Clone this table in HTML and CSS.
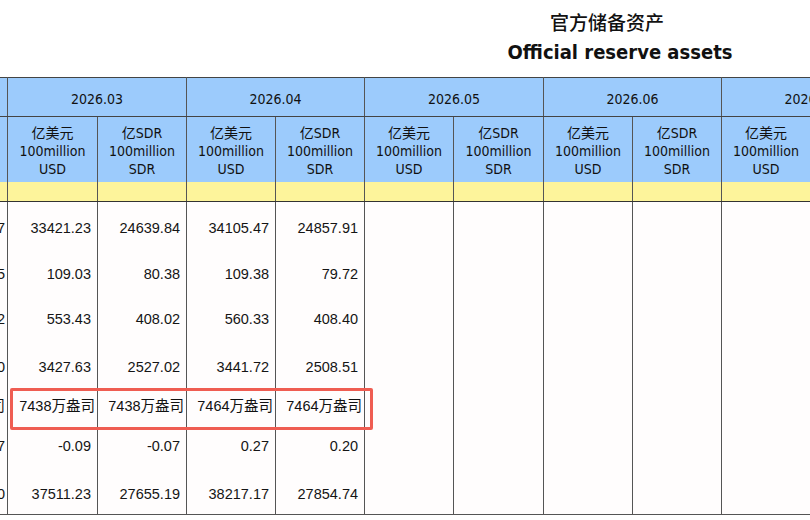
FILE: index.html
```html
<!DOCTYPE html>
<html lang="zh">
<head>
<meta charset="utf-8">
<title>官方储备资产 Official reserve assets</title>
<link rel="stylesheet" href="styles.css">
</head>
<body>
<div class="title">
  <div class="title-cn">官方储备资产</div>
  <div class="title-en">Official reserve assets</div>
</div>
<div class="sheet">
  <table class="grid">
    <colgroup>
      <col class="c-prev">
      <col class="c90"><col class="c89">
      <col class="c89"><col class="c89">
      <col class="c89"><col class="c90">
      <col class="c89"><col class="c89">
      <col class="c89"><col class="c89">
    </colgroup>
    <thead>
      <tr class="h-month">
        <th></th>
        <th colspan="2">2026.03</th>
        <th colspan="2">2026.04</th>
        <th colspan="2">2026.05</th>
        <th colspan="2">2026.06</th>
        <th colspan="2">2026.07</th>
      </tr>
      <tr class="h-unit">
        <th></th>
        <th>亿美元<br>100million<br>USD</th>
        <th>亿SDR<br>100million<br>SDR</th>
        <th>亿美元<br>100million<br>USD</th>
        <th>亿SDR<br>100million<br>SDR</th>
        <th>亿美元<br>100million<br>USD</th>
        <th>亿SDR<br>100million<br>SDR</th>
        <th>亿美元<br>100million<br>USD</th>
        <th>亿SDR<br>100million<br>SDR</th>
        <th>亿美元<br>100million<br>USD</th>
        <th>亿SDR<br>100million<br>SDR</th>
      </tr>
      <tr class="h-band">
        <th></th><th></th><th></th><th></th><th></th><th></th><th></th><th></th><th></th><th></th><th></th>
      </tr>
    </thead>
    <tbody>
      <tr class="r1">
        <td class="prev">24518.57</td><td>33421.23</td><td>24639.84</td><td>34105.47</td><td>24857.91</td><td></td><td></td><td></td><td></td><td></td><td></td>
      </tr>
      <tr class="r2">
        <td class="prev">79.85</td><td>109.03</td><td>80.38</td><td>109.38</td><td>79.72</td><td></td><td></td><td></td><td></td><td></td><td></td>
      </tr>
      <tr class="r3">
        <td class="prev">407.92</td><td>553.43</td><td>408.02</td><td>560.33</td><td>408.40</td><td></td><td></td><td></td><td></td><td></td><td></td>
      </tr>
      <tr class="r4">
        <td class="prev">2516.60</td><td>3427.63</td><td>2527.02</td><td>3441.72</td><td>2508.51</td><td></td><td></td><td></td><td></td><td></td><td></td>
      </tr>
      <tr class="r5 gold">
        <td class="prev">7421万盎司</td><td>7438万盎司</td><td>7438万盎司</td><td>7464万盎司</td><td>7464万盎司</td><td></td><td></td><td></td><td></td><td></td><td></td>
      </tr>
      <tr class="r6">
        <td class="prev">-0.07</td><td>-0.09</td><td>-0.07</td><td>0.27</td><td>0.20</td><td></td><td></td><td></td><td></td><td></td><td></td>
      </tr>
      <tr class="r7">
        <td class="prev">27527.30</td><td>37511.23</td><td>27655.19</td><td>38217.17</td><td>27854.74</td><td></td><td></td><td></td><td></td><td></td><td></td>
      </tr>
    </tbody>
  </table>
  <div class="highlight"></div>
</div>
</body>
</html>
```
FILE: styles.css
```css
html, body {
  margin: 0;
  padding: 0;
  background: #ffffff;
  overflow: hidden;
}

body {
  width: 810px;
  height: 520px;
  font-family: "Liberation Sans", "Noto Sans CJK SC", sans-serif;
  color: #111111;
}

.title {
  padding-top: 7px;
  padding-left: 404px;
  height: 77px;
  box-sizing: border-box;
  text-align: center;
  width: 810px;
}

.title-cn {
  font-family: "Noto Sans CJK SC", sans-serif;
  font-size: 19px;
  font-weight: 500;
  line-height: 30px;
  height: 30px;
  width: 406px;
}

.title-en {
  font-family: "DejaVu Sans Condensed", "DejaVu Sans", sans-serif;
  font-weight: bold;
  font-size: 20px;
  line-height: 30px;
  height: 30px;
  width: 406px;
  margin-left: 13px;
}

.sheet {
  position: relative;
  margin-left: -93px;
  width: 992px;
}

.grid {
  border-collapse: collapse;
  table-layout: fixed;
  width: 992px;
}

.c-prev { width: 100px; }
.c90 { width: 90px; }
.c89 { width: 89px; }

.grid th,
.grid td {
  border-left: 1px solid #555555;
  border-right: 1px solid #555555;
  padding: 0;
  overflow: hidden;
  white-space: nowrap;
}

.grid thead th {
  font-family: "DejaVu Sans Condensed", "Noto Sans CJK SC", sans-serif;
  font-weight: normal;
  font-size: 14px;
  color: #111111;
  text-align: center;
  vertical-align: middle;
}

.h-month th {
  background: #9ccbfc;
  height: 35px;
  border-top: 1px solid #444444;
  border-bottom: 1px solid #444444;
  padding-top: 3px;
}

.h-unit th {
  background: #9ccbfc;
  height: 62px;
  line-height: 18px;
  padding-top: 3px;
}

.h-band th {
  background: #fdf49b;
  height: 19px;
  border-bottom: 1px solid #333333;
}

.grid tbody td {
  font-size: 14.5px;
  line-height: 17px;
  text-align: right;
  vertical-align: top;
  padding-top: 18px;
  padding-right: 6px;
  background: #fffdfd;
  color: #151515;
}

.grid tbody td.prev {
  padding-right: 2px;
}

.r1 { height: 46px; }
.r2 { height: 45px; }
.r3 { height: 48px; }
.r4 { height: 40px; }
.r5 { height: 39px; }
.r6 { height: 48px; }
.r7 { height: 47px; }

.r7 td {
  border-bottom: 1px solid #555555;
}

.grid tbody .gold td {
  padding-right: 2px;
  padding-top: 17px;
  color: #111111;
}

.highlight {
  position: absolute;
  left: 103px;
  top: 311px;
  width: 357px;
  height: 36px;
  border: 3px solid #ef5d52;
  border-radius: 2px;
}
```
